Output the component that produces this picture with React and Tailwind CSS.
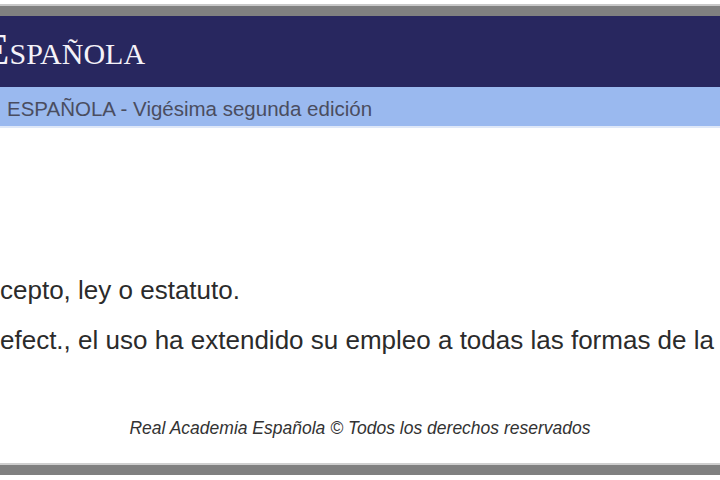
import React from "react";

const serif = { fontFamily: '"Liberation Serif", "Times New Roman", serif' };
const sans = { fontFamily: '"Liberation Sans", Arial, sans-serif' };

const App = () => {
  return (
    <div className="w-[720px] h-[480px] bg-white overflow-hidden flex flex-col">
      {/* top frame */}
      <div className="h-[4px] bg-white" />
      <div className="h-[2px] bg-[#c8c8c8]" />
      <div className="h-[10px] bg-[#808080]" />

      {/* banner */}
      <div className="h-[71px] bg-[#28275f] flex items-center overflow-hidden">
        <div
          className="ml-[-18px] mt-[-5px] text-[#f4f2f8] whitespace-nowrap leading-none"
          style={serif}
        >
          <span className="text-[45px]">E</span>
          <span className="text-[30px]">SPAÑOLA</span>
        </div>
      </div>

      {/* sub bar */}
      <div className="h-[41px] bg-[#9ab9ef] flex items-center border-b-2 border-[#dfe8f8]">
        <div
          className="ml-[7px] mt-[5px] text-[20.5px] text-[#4a4d60] whitespace-nowrap"
          style={sans}
        >
          ESPAÑOLA - Vigésima segunda edición
        </div>
      </div>

      {/* content */}
      <div className="flex-1 flex flex-col text-[#2b2b2b]" style={sans}>
        <div className="h-[147px]" />
        <p className="text-[26px] leading-[30px] whitespace-nowrap">
          cepto, ley o estatuto.
        </p>
        <p className="mt-[20px] text-[26px] leading-[30px] whitespace-nowrap">
          efect., el uso ha extendido su empleo a todas las formas de la
        </p>
        <div className="flex-1" />
        <p className="text-center italic text-[17.5px] text-[#333333] mb-[22px]">
          Real Academia Española © Todos los derechos reservados
        </p>
      </div>

      {/* bottom frame */}
      <div className="h-[2px] bg-[#cfcfcf]" />
      <div className="h-[10px] bg-[#808080]" />
      <div className="h-[5px] bg-white" />
    </div>
  );
};

export default App;
